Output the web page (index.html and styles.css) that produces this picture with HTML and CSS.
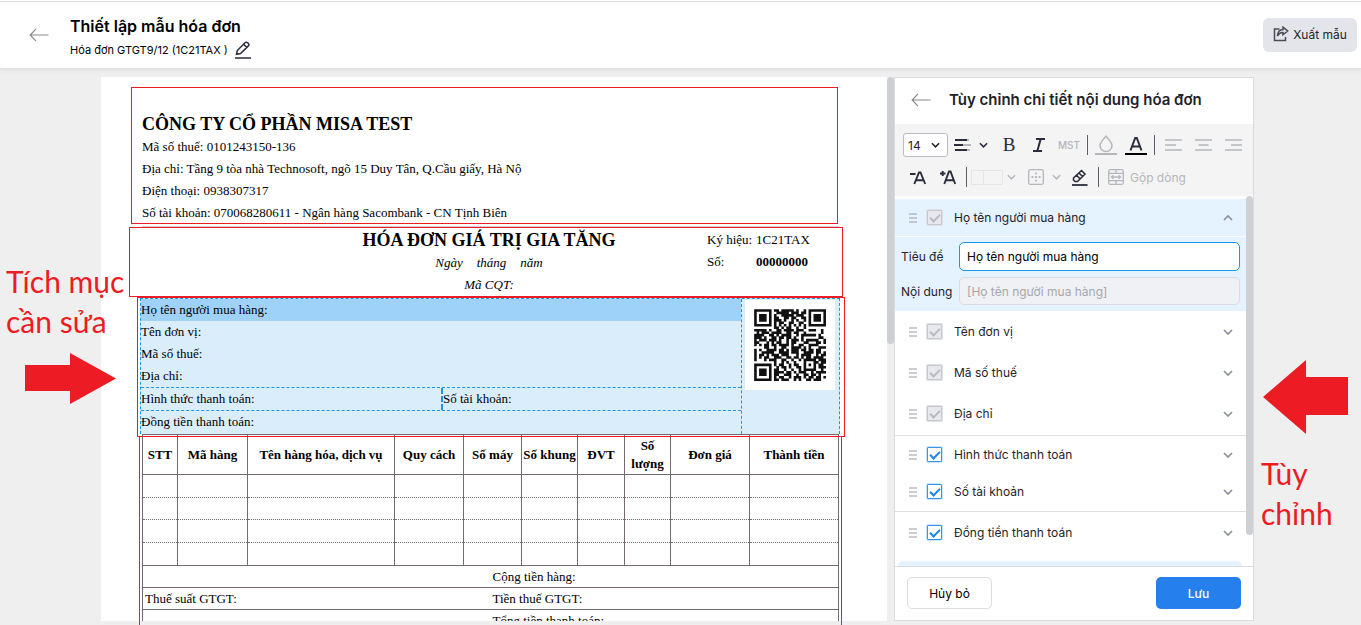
FILE: index.html
```
<!DOCTYPE html>
<html lang="vi">
<head>
    <meta charset="UTF-8">
    <meta name="viewport" content="width=device-width, initial-scale=1.0">
    <title>Thiết lập mẫu hóa đơn</title>
    <link rel="stylesheet" href="styles.css">
</head>
<body>
    <!-- shared icons -->
    <svg width="0" height="0" class="defs" aria-hidden="true">
        <symbol id="back" viewBox="0 0 20 14"><path d="M19.500 7H1.500M7 .8L1.200 7L7 13.200" fill="none" stroke="currentColor" stroke-width="1.200"/></symbol>
        <symbol id="chevron" viewBox="0 0 10 6"><path d="M1 1l4 4l4-4" fill="none" stroke="currentColor" stroke-width="1.700"/></symbol>
        <symbol id="drag" viewBox="0 0 8 10"><path d="M0 1h8M0 5h8M0 9h8" stroke="currentColor" stroke-width="1.200"/></symbol>
    </svg>

    <header class="topbar">
        <button class="icon-btn back-btn" aria-label="Quay lại"><svg width="20" height="14"><use href="#back"/></svg></button>
        <div class="topbar-title">
            <h1>Thiết lập mẫu hóa đơn</h1>
            <div class="subtitle">
                <span>Hóa đơn GTGT9/12 (1C21TAX )</span>
                <button class="icon-btn" aria-label="Sửa tên">
                    <svg width="16" height="18" viewBox="0 0 16 18" fill="none" stroke="#2b2d3d" stroke-width="1.500"><path d="M1.500 13.200L2.300 9.500L10 1.800Q11.200.6 12.800 1.800L13.200 2.200Q14.600 3.700 13.400 4.900L5.600 12.500ZM8.600 3.200L12 6.600"/><path d="M0 17H16"/></svg>
                </button>
            </div>
        </div>
        <button class="export-btn">
            <svg width="16" height="16" viewBox="0 0 16 16" fill="none" stroke="#4a4c58" stroke-width="1.500"><path d="M6.500 3H1.500V14.500H12.500V11"/><path d="M10 1.200L14.700 5L10 8.800V6.600Q6.500 6.400 4.500 10Q4.800 4 10 3.600Z"/></svg>
            Xuất mẫu
        </button>
    </header>

    <main class="workspace">
        <aside class="note note-left">
            <p>Tích mục<br>cần sửa</p>
            <svg width="92" height="51" viewBox="0 0 92 51"><path d="M0 12H45V0L91 25.500L45 51V38H0Z" fill="#ed1c24"/></svg>
        </aside>

        <section class="preview">
            <div class="sheet">
                <div class="seller">
                    <div class="mark"></div>
                    <h2>CÔNG TY CỔ PHẦN MISA TEST</h2>
                    <p>Mã số thuế: 0101243150-136</p>
                    <p>Địa chỉ: Tầng 9 tòa nhà Technosoft, ngõ 15 Duy Tân, Q.Cầu giấy, Hà Nộ</p>
                    <p>Điện thoại: 0938307317</p>
                    <p>Số tài khoản: 070068280611 - Ngân hàng Sacombank - CN Tịnh Biên</p>
                </div>

                <div class="invoice-head">
                    <div class="mark"></div>
                    <div class="invoice-title">
                        <h2>HÓA ĐƠN GIÁ TRỊ GIA TĂNG</h2>
                        <p class="date"><span>Ngày</span><span>tháng</span><span>năm</span></p>
                        <p class="date">Mã CQT:</p>
                    </div>
                    <dl class="serial">
                        <dt>Ký hiệu:</dt><dd>1C21TAX</dd>
                        <dt>Số:</dt><dd><b>00000000</b></dd>
                    </dl>
                </div>

                <div class="buyer">
                    <div class="mark"></div>
                    <div class="buyer-info">
                        <p class="active">Họ tên người mua hàng:</p>
                        <p>Tên đơn vị:</p>
                        <p>Mã số thuế:</p>
                        <p>Địa chỉ:</p>
                        <div class="pay-row">
                            <p>Hình thức thanh toán:</p>
                            <p>Số tài khoản:</p>
                        </div>
                        <p>Đồng tiền thanh toán:</p>
                    </div>
                    <div class="buyer-qr">
                        <svg id="qr" width="90" height="90" viewBox="-3.700 -3.700 36.400 36.400" role="img" aria-label="QR"><path fill="#111"/></svg>
                    </div>
                </div>

                <table class="goods">
                    <colgroup>
                        <col class="c-stt"><col class="c-code"><col class="c-name"><col class="c-spec"><col class="c-engine"><col class="c-frame"><col class="c-unit"><col class="c-qty"><col class="c-price"><col class="c-total">
                    </colgroup>
                    <thead>
                        <tr><th>STT</th><th>Mã hàng</th><th>Tên hàng hóa, dịch vụ</th><th>Quy cách</th><th>Số máy</th><th>Số khung</th><th>ĐVT</th><th>Số lượng</th><th>Đơn giá</th><th>Thành tiền</th></tr>
                    </thead>
                    <tbody>
                        <tr><td></td><td></td><td></td><td></td><td></td><td></td><td></td><td></td><td></td><td></td></tr>
                        <tr><td></td><td></td><td></td><td></td><td></td><td></td><td></td><td></td><td></td><td></td></tr>
                        <tr><td></td><td></td><td></td><td></td><td></td><td></td><td></td><td></td><td></td><td></td></tr>
                        <tr><td></td><td></td><td></td><td></td><td></td><td></td><td></td><td></td><td></td><td></td></tr>
                    </tbody>
                </table>
                <div class="summary">
                    <div><span></span><span>Cộng tiền hàng:</span></div>
                    <div><span>Thuế suất GTGT:</span><span>Tiền thuế GTGT:</span></div>
                    <div><span></span><span>Tổng tiền thanh toán:</span></div>
                </div>
            </div>
            <div class="preview-thumb"></div>
            <div class="mark mark-goods"></div>
        </section>

        <section class="panel">
            <div class="panel-head">
                <button class="icon-btn back-btn" aria-label="Quay lại"><svg width="20" height="14"><use href="#back"/></svg></button>
                <h2>Tùy chỉnh chi tiết nội dung hóa đơn</h2>
            </div>

            <div class="toolbar">
                <div class="tool-row">
                    <div class="size-select">
                        <select aria-label="Cỡ chữ"><option>14</option></select>
                        <svg width="9" height="6"><use href="#chevron"/></svg>
                    </div>
                    <button class="tool with-arrow" aria-label="Căn lề">
                        <svg width="17" height="12" viewBox="0 0 17 12" fill="none" stroke-width="1.800"><path d="M1 1H13M0 6H9M1 11H13" stroke="#2b2d3d"/><path d="M13 1H15M9 6H17M13 11H16" stroke="#b4b6bd"/></svg>
                        <svg width="9" height="6"><use href="#chevron"/></svg>
                    </button>
                    <button class="tool bold" aria-label="Đậm">B</button>
                    <button class="tool" aria-label="Nghiêng"><svg width="12" height="14" viewBox="0 0 12 14" fill="none" stroke="#2b2d3d" stroke-width="2"><path d="M3 1H12M0 13H9M7.700 1L4.300 13"/></svg></button>
                    <button class="tool mst" disabled>MST</button>
                    <i class="sep"></i>
                    <button class="tool" disabled aria-label="Màu nền"><svg width="22" height="20" viewBox="0 0 22 20" fill="none" stroke="currentColor" stroke-width="1.500"><path d="M11 1.200Q5 7.500 5 10.500A6 6 0 0 0 17 10.500Q17 7.500 11 1.200Z"/><path d="M0 19H22" stroke-width="2"/></svg></button>
                    <button class="tool" aria-label="Màu chữ"><svg width="22" height="20" viewBox="0 0 22 20" fill="none" stroke="#2b2d3d" stroke-width="2"><path d="M5.500 15.500L10.200 3H11.800L16.500 15.500M7.500 11.500H14.500"/><path d="M0 19H22" stroke="#000"/></svg></button>
                    <i class="sep"></i>
                    <button class="tool" disabled aria-label="Căn trái"><svg width="17" height="12" viewBox="0 0 17 12" stroke="currentColor" stroke-width="1.400"><path d="M0 1H17M0 6H11M0 11H17"/></svg></button>
                    <button class="tool" disabled aria-label="Căn giữa"><svg width="17" height="12" viewBox="0 0 17 12" stroke="currentColor" stroke-width="1.400"><path d="M0 1H17M3.500 6H13.500M0 11H17"/></svg></button>
                    <button class="tool" disabled aria-label="Căn phải"><svg width="17" height="12" viewBox="0 0 17 12" stroke="currentColor" stroke-width="1.400"><path d="M0 1H17M6 6H17M0 11H17"/></svg></button>
                </div>
                <div class="tool-row">
                    <button class="tool" aria-label="Giảm cỡ chữ"><svg width="16" height="15" viewBox="0 0 16 15" fill="none" stroke="#2b2d3d" stroke-width="1.900"><path d="M0 4H5.500M4.300 14L9 2.500H10.500L15.200 14M6.300 10.200H13.200"/></svg></button>
                    <button class="tool" aria-label="Tăng cỡ chữ"><svg width="16" height="15" viewBox="0 0 16 15" fill="none" stroke="#2b2d3d" stroke-width="1.900"><path d="M0 3.500H5.500M2.700 1V6M4.300 14L9 1.500H10.500L15.200 14M6.300 10.200H13.200"/></svg></button>
                    <i class="sep"></i>
                    <button class="tool cell-tool" disabled aria-label="Kiểu viền">
                        <svg width="32" height="15" viewBox="0 0 32 15" fill="none" stroke="#e4e5e8"><path d="M.5.5H31.500V14.500H.5ZM12.500.5V14.500"/></svg>
                        <svg width="9" height="6"><use href="#chevron"/></svg>
                    </button>
                    <button class="tool border-tool" disabled aria-label="Đường viền">
                        <svg width="16" height="16" viewBox="0 0 16 16" fill="none" stroke="currentColor" stroke-width="1.300"><rect x=".7" y=".7" width="14.600" height="14.600" rx="1.500"/><path d="M8 3.500V12.500M3.500 8H12.500" stroke-width="1.800" stroke-dasharray="1.800 1.800"/></svg>
                        <svg width="9" height="6"><use href="#chevron"/></svg>
                    </button>
                    <button class="tool" aria-label="Xóa định dạng"><svg width="16" height="17" viewBox="0 0 16 17" fill="none" stroke="#2b2d3d" stroke-width="1.600"><path d="M1.500 9L9.500 1.500L13 5L5.500 12.500H3L1.500 11ZM4.500 6.200L8 9.800M7 4L10.500 7.500"/><path d="M0 16H15.500" stroke-width="1.800"/></svg></button>
                    <i class="sep"></i>
                    <button class="tool merge-tool" disabled>
                        <svg width="16" height="16" viewBox="0 0 16 16" fill="none" stroke="currentColor" stroke-width="1.300"><rect x=".7" y=".7" width="14.600" height="14.600" rx="1.500"/><path d="M1 4.300H15M1 11.700H15M8 1V4M8 12V15M3.500 8H12.500M5.500 6.300L3.500 8L5.500 9.700M10.500 6.300L12.500 8L10.500 9.700"/></svg>
                        Gộp dòng
                    </button>
                </div>
            </div>

            <div class="fields">
                <div class="fields-thumb"></div>
                <div class="row open">
                    <svg class="drag" width="8" height="10"><use href="#drag"/></svg>
                    <input type="checkbox" id="f1" checked disabled>
                    <label for="f1">Họ tên người mua hàng</label>
                    <button class="icon-btn up" aria-label="Thu gọn"><svg width="10" height="6"><use href="#chevron"/></svg></button>
                </div>
                <div class="detail">
                    <label for="title-input">Tiêu đề</label>
                    <input type="text" id="title-input" value="Họ tên người mua hàng">
                    <label for="content-input">Nội dung</label>
                    <input type="text" id="content-input" value="[Họ tên người mua hàng]" disabled>
                </div>
                <div class="group">
                    <div class="row">
                        <svg class="drag" width="8" height="10"><use href="#drag"/></svg>
                        <input type="checkbox" id="f2" checked disabled>
                        <label for="f2">Tên đơn vị</label>
                        <button class="icon-btn" aria-label="Mở rộng"><svg width="10" height="6"><use href="#chevron"/></svg></button>
                    </div>
                    <div class="row">
                        <svg class="drag" width="8" height="10"><use href="#drag"/></svg>
                        <input type="checkbox" id="f3" checked disabled>
                        <label for="f3">Mã số thuế</label>
                        <button class="icon-btn" aria-label="Mở rộng"><svg width="10" height="6"><use href="#chevron"/></svg></button>
                    </div>
                    <div class="row">
                        <svg class="drag" width="8" height="10"><use href="#drag"/></svg>
                        <input type="checkbox" id="f4" checked disabled>
                        <label for="f4">Địa chỉ</label>
                        <button class="icon-btn" aria-label="Mở rộng"><svg width="10" height="6"><use href="#chevron"/></svg></button>
                    </div>
                </div>
                <div class="group compact">
                    <div class="row">
                        <svg class="drag" width="8" height="10"><use href="#drag"/></svg>
                        <input type="checkbox" id="f5" checked>
                        <label for="f5">Hình thức thanh toán</label>
                        <button class="icon-btn" aria-label="Mở rộng"><svg width="10" height="6"><use href="#chevron"/></svg></button>
                    </div>
                    <div class="row">
                        <svg class="drag" width="8" height="10"><use href="#drag"/></svg>
                        <input type="checkbox" id="f6" checked>
                        <label for="f6">Số tài khoản</label>
                        <button class="icon-btn" aria-label="Mở rộng"><svg width="10" height="6"><use href="#chevron"/></svg></button>
                    </div>
                </div>
                <div class="group">
                    <div class="row">
                        <svg class="drag" width="8" height="10"><use href="#drag"/></svg>
                        <input type="checkbox" id="f7" checked>
                        <label for="f7">Đồng tiền thanh toán</label>
                        <button class="icon-btn" aria-label="Mở rộng"><svg width="10" height="6"><use href="#chevron"/></svg></button>
                    </div>
                </div>
                <div class="add-field"></div>
            </div>

            <div class="panel-foot">
                <button class="cancel">Hủy bỏ</button>
                <button class="save">Lưu</button>
            </div>
        </section>

        <aside class="note note-right">
            <svg width="86" height="74" viewBox="0 0 86 74"><path d="M0 37L43 0V17H85V55H43V74Z" fill="#ed1c24"/></svg>
            <p>Tùy<br>chỉnh</p>
        </aside>
    </main>

    <script src="script.js"></script>
</body>
</html>
```

FILE: styles.css
```
* {
    box-sizing: border-box;
}

body {
    margin: 0;
    height: 100vh;
    display: flex;
    flex-direction: column;
    background: #efefef;
    color: #1f2229;
    font-family: Inter, "Liberation Sans", sans-serif;
    font-size: 12px;
    overflow: hidden;
}

h1, h2, p, dl, dd {
    margin: 0;
}

button, input, select {
    font: inherit;
    color: inherit;
}

button {
    display: flex;
    align-items: center;
    justify-content: center;
    padding: 0;
    border: none;
    background: none;
    cursor: pointer;
}

.defs {
    position: absolute;
}

/* top bar */
.topbar {
    display: flex;
    align-items: center;
    height: 69px;
    flex: none;
    padding: 2px 4px 0 29px;
    background: #fff;
    border-bottom: 1px solid #e2e2e2;
    box-shadow: inset 0 1px #fff, inset 0 2px #dcdcdc, 0 1px 4px #dedede;
}

.back-btn {
    color: #8a8a8a;
}

.topbar-title {
    flex: 1;
    margin-left: 21px;
    padding-top: 5px;
    color: #000;
}

.topbar-title h1 {
    font-size: 16px;
    line-height: 24px;
    font-weight: 600;
}

.subtitle {
    display: flex;
    align-items: center;
    gap: 7px;
    height: 24px;
    font-size: 11px;
}

.export-btn {
    gap: 4px;
    width: 94px;
    height: 34px;
    padding-bottom: 2px;
    border-radius: 6px;
    background: #e4e5eb;
}

/* workspace */
.workspace {
    flex: 1;
    min-height: 0;
    display: grid;
    grid-template-columns: 101px minmax(0, 1fr) 360px 107px;
    grid-template-rows: minmax(0, 1fr);
    padding: 8px 0 4px;
}

.note {
    z-index: 2;
    color: #ed1c24;
    font-family: Lato, "Open Sans", sans-serif;
    font-size: 30px;
    line-height: 40px;
    white-space: nowrap;
}

.note svg {
    display: block;
}

.note-left {
    padding: 184px 0 0 6px;
}

.note-left svg {
    margin: 12px 0 0 19px;
}

.note-right {
    padding: 283px 0 0 9px;
}

.note-right p {
    margin: 19px 0 0 -2px;
}

.preview {
    position: relative;
    padding-right: 7px;
}

.sheet {
    height: 100%;
    overflow: hidden;
    padding: 0 48px 0 41px;
    background: #fff;
    color: #000;
    font-family: "Liberation Serif", serif;
    font-size: 13px;
    line-height: 22px;
}

.preview-thumb {
    position: absolute;
    top: 0;
    right: 0;
    width: 7px;
    height: 267px;
    border-radius: 4px;
    background: #cfd0d4;
}

/* red frames round the editable areas */
.mark {
    position: absolute;
    border: 1px solid #ed1c24;
    pointer-events: none;
}

.seller {
    position: relative;
    padding: 36px 0 2px;
    border-bottom: 1px solid #cfd0d4;
}

.seller h2 {
    font-size: 18px;
    line-height: 23px;
}

.seller .mark {
    inset: 10px 1px 2px -11px;
}

.invoice-head {
    position: relative;
    display: grid;
    grid-template-columns: 129px 1fr 132px;
    padding: 1px 0 2px;
}

.invoice-head .mark {
    inset: 0 -4px 1px -13px;
}

.invoice-title {
    grid-column: 2;
    text-align: center;
}

.invoice-title h2 {
    font-size: 18px;
    line-height: 24px;
}

.date {
    display: flex;
    justify-content: center;
    gap: 14px;
    font-style: italic;
}

.serial {
    display: grid;
    grid-template-columns: 49px 1fr;
    align-content: start;
    padding-top: 1px;
}

.buyer {
    position: relative;
    display: grid;
    grid-template-columns: 1fr 97px;
    margin: 0 -1px 0 -2px;
    background: #daedfb;
    border: 1px dashed #1e96e8;
    border-bottom: none;
}

.buyer .mark {
    inset: -2px -6px -3px -4px;
}

.buyer .active {
    background: #9fd2f8;
}

.buyer-info {
    border-right: 1px dashed #1e96e8;
    padding-bottom: 1px;
}

.pay-row {
    display: grid;
    grid-template-columns: 1fr 1fr;
    border: dashed #1e96e8;
    border-width: 1px 0;
}

.pay-row p + p {
    border-left: 2px dashed #1e96e8;
}

.buyer-qr {
    padding: 1px 3px;
}

.buyer-qr svg {
    display: block;
    background: #fff;
}

.goods {
    width: 100%;
    table-layout: fixed;
    border-collapse: collapse;
}

.goods th, .goods td {
    padding: 0;
    border: 1px solid #756a6c;
}

.goods th {
    height: 40px;
    line-height: 18px;
}

.goods td {
    height: 23px;
    border-bottom-style: dotted;
    border-top-style: dotted;
}

.goods tr:nth-child(2) td {
    height: 22px;
}

.goods tr:first-child td {
    border-top-style: solid;
}

.goods tr:last-child td {
    border-bottom-style: solid;
}

.c-stt { width: 35px; }
.c-code { width: 70px; }
.c-name { width: 147px; }
.c-spec { width: 69px; }
.c-engine { width: 58px; }
.c-frame { width: 56px; }
.c-unit { width: 47px; }
.c-qty { width: 46px; }
.c-price { width: 79px; }
.c-total { width: 89px; }

.summary {
    border: solid #756a6c;
    border-width: 0 1px;
    line-height: 21px;
}

.summary div {
    display: grid;
    grid-template-columns: 1fr 1fr;
    height: 22px;
    border-bottom: 1px solid #756a6c;
}

.summary span {
    padding-left: 2px;
}

.mark-goods {
    inset: 359px 52px -4px 38px;
    border-bottom: none;
}

/* settings panel */
.panel {
    display: flex;
    flex-direction: column;
    min-height: 0;
    background: #fff;
    border: 1px solid #d9dbe0;
}

.panel-head {
    display: flex;
    align-items: center;
    gap: 18px;
    height: 46px;
    flex: none;
    padding: 0 0 2px 16px;
}

.panel-head h2 {
    font-size: 15px;
    line-height: 20px;
    font-weight: 600;
}

.toolbar {
    flex: none;
    height: 72px;
    padding: 5px 4px 0 8px;
    background: #f4f4f5;
}

.tool-row {
    display: flex;
    align-items: center;
    height: 32px;
}

.tool {
    width: 30px;
    height: 24px;
    flex: none;
    color: #2b2d3d;
}

.tool:disabled {
    color: #b4b6bb;
}

.tool.bold {
    font-family: "Liberation Serif", serif;
    font-size: 19px;
}

.tool.mst {
    font-size: 10px;
    font-weight: 500;
}

.tool.with-arrow {
    width: 46px;
    gap: 8px;
}

.tool.cell-tool {
    width: 52px;
    gap: 4px;
    justify-content: flex-start;
    padding-left: 1px;
}

.tool.border-tool {
    width: 43px;
    gap: 8px;
    justify-content: flex-start;
    padding-left: 6px;
}

.tool.merge-tool {
    width: auto;
    gap: 6px;
    padding-left: 6px;
}

.sep {
    flex: none;
    width: 1px;
    height: 20px;
    margin: 0 3px;
    background: #5c5f6b;
}

.size-select {
    position: relative;
    flex: none;
}

.size-select select {
    display: block;
    width: 45px;
    height: 24px;
    padding: 0 4px;
    appearance: none;
    border: 1px solid #babcc4;
    border-radius: 3px;
    background: #fff;
}

.size-select svg {
    position: absolute;
    top: 9px;
    right: 8px;
    pointer-events: none;
}

.fields {
    position: relative;
    flex: 1;
    min-height: 0;
    overflow: hidden;
    padding: 3px 7px 0 0;
}

.fields-thumb {
    position: absolute;
    top: 0;
    right: 0;
    width: 7px;
    height: 339px;
    border-radius: 4px;
    background: #cfd0d4;
}

.row {
    display: flex;
    align-items: center;
    height: 41px;
    padding: 0 13px 0 14px;
}

.row .drag {
    color: #9a9ca3;
}

.row label {
    flex: 1;
    margin-left: 12px;
}

.row .icon-btn {
    color: #8e9097;
}

.row .up {
    transform: rotate(180deg);
}

.row.open {
    height: 38px;
    background: #e5f2ff;
}

.row.open, .group {
    border-bottom: 1px solid #fff;
}

.group + .group {
    border-top: 1px solid #dedfe3;
    border-bottom: none;
}

.compact {
    padding-bottom: 1px;
}

.compact .row {
    height: 37px;
}

input[type="checkbox"] {
    display: grid;
    place-content: center;
    appearance: none;
    width: 15px;
    height: 15px;
    margin: 0 0 0 10px;
    border: 1px solid #2f95f0;
    border-radius: 1px;
    background: #fff;
    box-shadow: 0 0 0 1px #cfe5fb;
}

input[type="checkbox"]::before {
    content: "";
    width: 8px;
    height: 4px;
    margin-bottom: 2px;
    border: solid #1a86ee;
    border-width: 0 0 2px 2px;
    transform: rotate(-45deg);
}

input[type="checkbox"]:disabled {
    border-color: #c6c8ce;
    background: #e8e9ec;
    box-shadow: 0 0 0 1px #dfe1e6;
}

input[type="checkbox"]:disabled::before {
    border-color: #b9bbc1;
}

.detail {
    display: grid;
    grid-template-columns: 52px 1fr;
    align-items: center;
    gap: 6px;
    padding: 5px 6px 6px;
    background: #e5f2ff;
}

.detail input {
    width: 100%;
    height: 29px;
    padding: 0 7px;
    border: 1px solid #1e96e8;
    border-radius: 5px;
    background: #fff;
    color: #000;
    outline: none;
}

.detail input:disabled {
    height: 28px;
    border-color: #d9dbe0;
    background: #f0f1f4;
    color: #a5a7ad;
}

.add-field {
    height: 38px;
    margin: 8px 4px 0 3px;
    border-radius: 5px;
    background: #e5f2ff;
}

.panel-foot {
    display: flex;
    justify-content: space-between;
    flex: none;
    height: 54px;
    padding: 10px 12px;
    border-top: 1px solid #d9dbe0;
}

.panel-foot button {
    width: 85px;
    height: 32px;
    border-radius: 5px;
}

.panel-foot .cancel {
    border: 1px solid #dcdde1;
    color: #000;
}

.panel-foot .save {
    background: #257fec;
    color: #fff;
    font-weight: 500;
}
```

FILE: script.js
```
// QR modules, one string per line
const modules = [
    '#######.##.#####.#..#.#######',
    '#.....#..#####.###.##.#.....#',
    '#.###.#.#..#####.###..#.###.#',
    '#.###.#.##..##.##..##.#.###.#',
    '#.###.#.###.#..#.#..#.#.###.#',
    '#.....#.#.##..##..##..#.....#',
    '#######.#.#.#.#.#.#.#.#######',
    '........##.#.##..#..#........',
    '#####.#..##.####.###..###..#.',
    '.#.###.####..##.##..#......#.',
    '####..##.#.####..#.######.#..',
    '###.#..##.##.##.#..#......##.',
    '#.###.###.#..#.###.#.#####..#',
    '##...#.#.##..#.##...##...##.#',
    '#.#.##.##.####.#..##..####...',
    '....##..#..##..####.#.#...###',
    '#.#..####.##.#.###.##.##.##..',
    '#..#####..####.###..####.##.#',
    '#.##.#.###.###...#.####..#.##',
    '#.#.##..###..##.##.#.##.####.',
    '#...#.###..##..#..#.#####.###',
    '........#..#.#..#...#...##.##',
    '#######.#.##..#.##..#.#.#.##.',
    '#.....#..#.##.#..##.#...#.###',
    '#.###.#.##..#..#..#.#####..#.',
    '#.###.#.####.##.#.###..#.####',
    '#.###.#.##..###..#..##.##.#..',
    '#.....#.#.##..#.###.#.##.##.#',
    '#######.##.###..#.#..##.###..'
];

let d = '';
modules.forEach((line, y) => {
    [...line].forEach((cell, x) => {
        if (cell === '#') {
            d += `M${x} ${y}h1.050v1.050h-1.050z`;
        }
    });
});
document.querySelector('#qr path').setAttribute('d', d);

// start editing at the beginning of the title
const titleInput = document.getElementById('title-input');
titleInput.focus();
titleInput.setSelectionRange(0, 0);
```
